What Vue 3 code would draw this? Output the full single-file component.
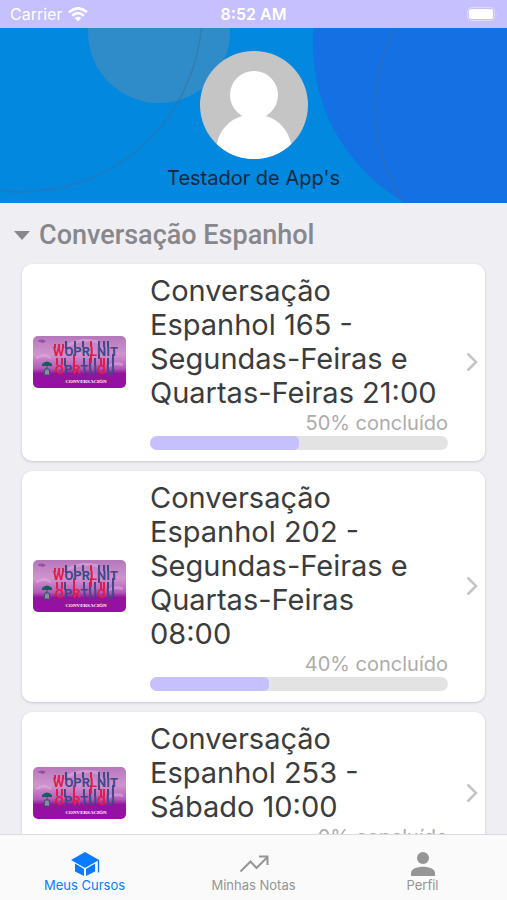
<script setup>
import { ref } from 'vue'

const open = ref(true)
const active = ref('cursos')
const courses = [
  { name: 'Conversação Espanhol 165 - Segundas-Feiras e Quartas-Feiras 21:00', done: 50 },
  { name: 'Conversação Espanhol 202 - Segundas-Feiras e Quartas-Feiras 08:00', done: 40 },
  { name: 'Conversação Espanhol 253 - Sábado 10:00', done: 0 }
]
</script>

<template>
  <div class="app">
    <div class="status">
      <div class="carrier">
        <span>Carrier</span>
        <svg width="20" height="15" viewBox="0 0 20 15" fill="none" stroke="#fff" stroke-width="2.6">
          <path d="M1 5.2Q10-2.6 19 5.2" />
          <path d="M4.2 8.7Q10 3.6 15.8 8.7" />
          <path d="M10 14.4L6.7 11.1Q10 8.4 13.3 11.1Z" fill="#fff" stroke="none" />
        </svg>
      </div>
      <time class="clock">8:52 AM</time>
      <div class="power">
        <svg width="30" height="14" viewBox="0 0 30 14">
          <rect x=".5" y=".5" width="27" height="13" rx="4" fill="none" stroke="#fff" stroke-opacity=".4" />
          <rect x="2" y="2" width="24" height="10" rx="2.5" fill="#fff" />
          <path d="M29 5q1 2 0 4z" fill="#fff" fill-opacity=".5" />
        </svg>
      </div>
    </div>

    <header class="profile">
      <svg class="backdrop" viewBox="0 0 507 175" preserveAspectRatio="xMidYMid slice" aria-hidden="true">
        <rect width="507" height="175" fill="#0388e0" />
        <circle cx="159" cy="4" r="71" fill="#308cc9" />
        <circle cx="494" cy="17" r="181" fill="#1470e3" />
        <g fill="none" stroke="#3c6e9c" stroke-opacity=".5" stroke-width="1.6">
          <circle cx="22" cy="-16" r="180" />
          <circle cx="545" cy="80" r="170" />
        </g>
      </svg>
      <svg class="avatar" viewBox="0 0 108 108" aria-hidden="true">
        <clipPath id="face"><circle cx="54" cy="54" r="54" /></clipPath>
        <g clip-path="url(#face)">
          <rect width="108" height="108" fill="#c5c5c5" />
          <path d="M42 60H66V65C79 69 88 79 91 92L96 108H12L17 92C20 79 29 69 42 65Z" fill="#fff" />
          <circle cx="54" cy="44" r="24" fill="#fff" />
        </g>
      </svg>
      <span class="user">Testador de App's</span>
    </header>

    <main class="content">
      <h2 class="heading">
        <button class="toggle" type="button" :aria-expanded="open" @click="open = !open">
          <svg width="16" height="9" viewBox="0 0 16 9"><path d="M0 0H16L8 9Z" fill="#87878c" /></svg>
          <span>Conversação Espanhol</span>
        </button>
      </h2>
      <div v-if="open" class="list">
        <a v-for="c in courses" :key="c.name" class="card" href="#">
          <svg class="thumb" viewBox="0 0 93 52" aria-hidden="true">
            <defs>
              <linearGradient id="cover" x2="0" y2="1">
                <stop offset="0" stop-color="#b577bb" />
                <stop offset=".35" stop-color="#cf94cf" />
                <stop offset=".62" stop-color="#b45bb9" />
                <stop offset=".72" stop-color="#91159d" />
                <stop offset="1" stop-color="#990da8" />
              </linearGradient>
            </defs>
            <rect width="93" height="52" rx="5" fill="url(#cover)" />
            <path d="M4 5q5-3 9 0l-3 2z" fill="#873b99" opacity=".7" />
            <path d="M35 9q14-7 30-3M3 22q8-5 15 0M76 30q7-4 14-1" fill="none" stroke="#e3b2df" stroke-width="3" opacity=".5" />
            <path d="M33 5v8M42 5v6M50 5v6M66 5v6M71 5v6M75 5v6M80 18v6M66 18v5M32 22v8M51 22v7M57 22v7M62 22v7M75 22v7M80 24v5" stroke="#414887" stroke-width="2" />
            <path d="M22 8v4M26 8v4M30 8v4M58 5v6M58 18v9M24 22v7M29 22v7M41 18v11M68 22v8M71 22v8" stroke="#e31b48" stroke-width="2" />
            <text class="letters" x="20" y="20"><tspan class="red">W</tspan>OPR<tspan class="red">L</tspan>NIT</text>
            <text class="letters" x="22" y="38"><tspan class="red">O</tspan>P<tspan class="red">R</tspan>TU<tspan class="red">O</tspan>U</text>
            <path d="M9 28q5-5 10 0v2H9z" fill="#175e60" />
            <path d="M14 30v3m-2 0h4l1 6H11z" fill="#9c83b0" stroke="#245d68" stroke-width="1" />
            <text class="caption" x="53" y="47" text-anchor="middle">CONVERSACIÓN</text>
          </svg>
          <div class="info">
            <h3 class="title">{{ c.name }}</h3>
            <span class="done">{{ c.done }}% concluído</span>
            <div class="bar" role="progressbar" :aria-valuenow="c.done" aria-valuemin="0" aria-valuemax="100">
              <div class="fill" :style="{ width: c.done + '%' }"></div>
            </div>
          </div>
          <svg class="chevron" width="12" height="20" viewBox="0 0 12 20" fill="none" stroke="#c5c5c8" stroke-width="2.6">
            <path d="M1.5 1.5L10 10L1.5 18.5" />
          </svg>
        </a>
      </div>
    </main>

    <nav class="tabs">
      <button type="button" :class="['tab', { on: active === 'cursos' }]" @click="active = 'cursos'">
        <svg width="30" height="26" viewBox="0 0 30 26" fill="currentColor">
          <path d="M15 1L29 9L15 17L1 9Z" />
          <path d="M5 11.500L14 17.500V25L5 20.500Z M25 11.500L16 17.500V25L25 20.500Z" />
          <path d="M5 12L15 18L25 12" fill="none" stroke="#fafafa" stroke-width="1" />
          <path d="M28.500 9V21.500" fill="none" stroke="currentColor" stroke-width="1.400" />
        </svg>
        <span>Meus Cursos</span>
      </button>
      <button type="button" :class="['tab', { on: active === 'notas' }]" @click="active = 'notas'">
        <svg width="30" height="26" viewBox="0 0 30 26" fill="none" stroke="currentColor" stroke-width="2">
          <path d="M1.500 20.500L11.500 10.500L17.500 17L28 6.500M20 5.500H28.500V14" />
        </svg>
        <span>Minhas Notas</span>
      </button>
      <button type="button" :class="['tab', { on: active === 'perfil' }]" @click="active = 'perfil'">
        <svg width="30" height="26" viewBox="0 0 30 26" fill="currentColor">
          <circle cx="15" cy="7" r="6" />
          <path d="M3 25V22C3 13.500 27 13.500 27 22V25Z" />
        </svg>
        <span>Perfil</span>
      </button>
    </nav>
  </div>
</template>

<style>
body {
  margin: 0;
}
</style>

<style scoped>
.app {
  display: flex;
  flex-direction: column;
  height: 100vh;
  overflow: hidden;
  background: #efeef3;
  font-family: Inter, "Liberation Sans", sans-serif;
}
.status {
  display: grid;
  grid-template-columns: 1fr auto 1fr;
  align-items: center;
  flex: none;
  height: 28px;
  padding: 0 10px;
  box-sizing: border-box;
  background: #c6c0fe;
  color: #fff;
  font-size: 16px;
}
.carrier {
  display: flex;
  align-items: center;
  gap: 6px;
}
.clock {
  font-weight: 600;
}
.power {
  display: flex;
  justify-content: flex-end;
}
.profile {
  position: relative;
  display: flex;
  flex-direction: column;
  align-items: center;
  flex: none;
  gap: 7px;
  padding: 23px 0 13px;
}
.backdrop {
  position: absolute;
  inset: 0;
  width: 100%;
  height: 100%;
}
.avatar {
  position: relative;
  width: 108px;
  height: 108px;
}
.user {
  position: relative;
  color: #14293c;
  font-size: 20px;
  line-height: 24px;
}
.content {
  flex: 1;
  min-height: 0;
  overflow: hidden;
}
.heading {
  margin: 0;
  padding: 16px 14px 12px;
}
.toggle {
  display: flex;
  align-items: center;
  gap: 9px;
  padding: 0;
  border: 0;
  background: none;
  color: #87878c;
  font: 500 27px/33px Roboto, sans-serif;
}
.list {
  display: flex;
  flex-direction: column;
  gap: 10px;
  padding: 0 22px;
}
.card {
  display: flex;
  align-items: center;
  padding: 10px 7px 11px 11px;
  border-radius: 10px;
  background: #fff;
  box-shadow: 0 1px 3px rgba(0, 0, 0, 0.16);
  text-decoration: none;
}
.thumb {
  flex: none;
  width: 93px;
  height: 52px;
}
.letters {
  fill: #414887;
  font: 700 13px Roboto, sans-serif;
}
.red {
  fill: #e31b48;
}
.caption {
  fill: #fff;
  font: 700 5px "Liberation Serif", serif;
}
.info {
  display: flex;
  flex: 1;
  flex-direction: column;
  min-width: 0;
  margin: 0 18px 0 24px;
}
.title {
  margin: 0;
  padding-right: 8px;
  color: #3a3c3e;
  font-size: 29px;
  font-weight: 400;
  line-height: 34px;
}
.done {
  align-self: flex-end;
  color: #acacac;
  font-size: 20px;
  line-height: 26px;
}
.bar {
  height: 14px;
  overflow: hidden;
  border-radius: 7px;
  background: #e3e3e3;
}
.fill {
  height: 100%;
  border-radius: 0 5px 5px 0;
  background: #c6c0fe;
}
.chevron {
  flex: none;
}
.tabs {
  display: grid;
  grid-template-columns: repeat(3, 1fr);
  flex: none;
  border-top: 1px solid #dcdce0;
  background: #fafafa;
}
.tab {
  display: flex;
  flex-direction: column;
  align-items: center;
  padding: 16px 0 7px;
  border: 0;
  background: none;
  color: #959595;
  font: 400 13px/16px Inter, sans-serif;
}
.tab.on {
  color: #0a7aff;
}
</style>
